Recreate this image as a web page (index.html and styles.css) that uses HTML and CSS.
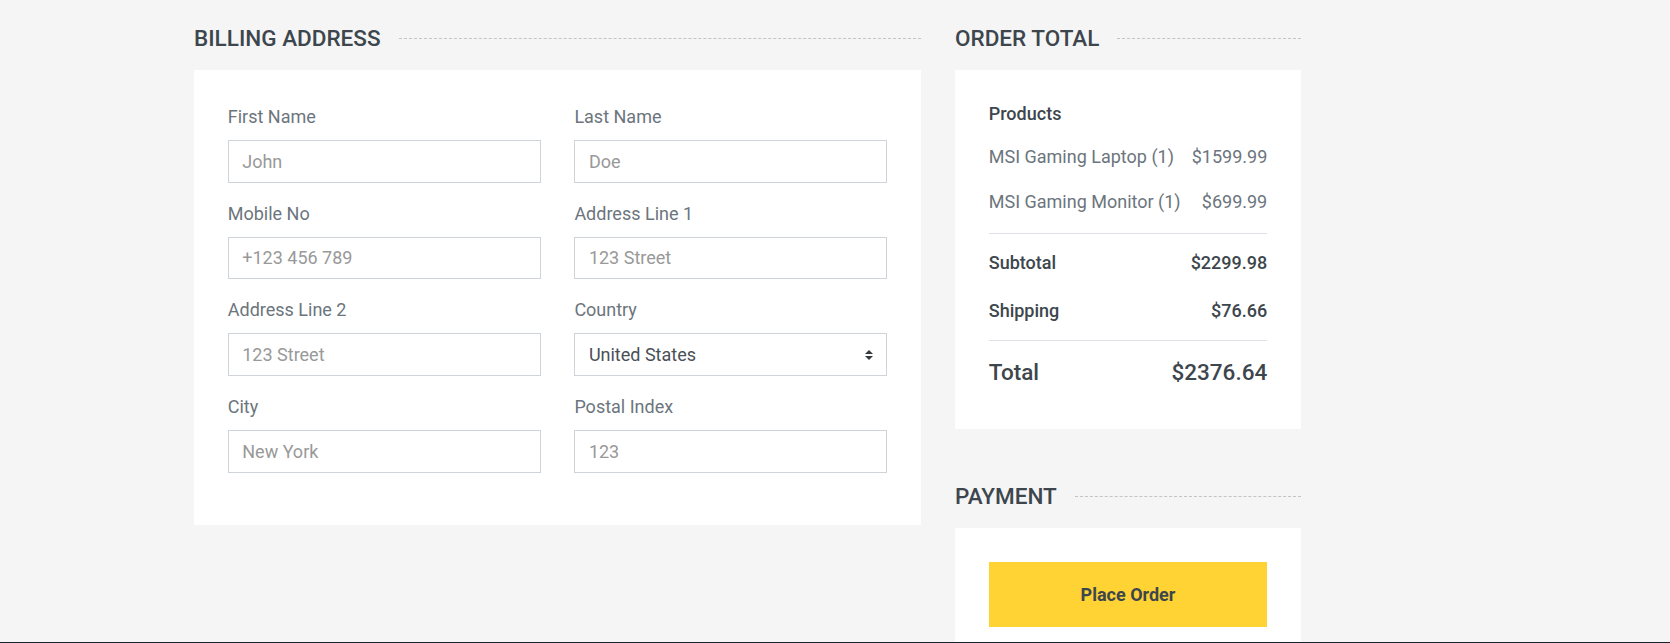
FILE: index.html
```html
<!DOCTYPE html>
<html lang="en">
<head>
<meta charset="utf-8">
<title>Checkout</title>
<link rel="stylesheet" href="styles.css">
</head>
<body>
<main class="checkout">
  <section class="col-billing">
    <h5 class="section-title"><span>Billing Address</span></h5>
    <div class="card billing-card">
      <div class="form-grid">
        <div class="form-group">
          <label>First Name</label>
          <input class="form-control" type="text" placeholder="John">
        </div>
        <div class="form-group">
          <label>Last Name</label>
          <input class="form-control" type="text" placeholder="Doe">
        </div>
        <div class="form-group">
          <label>Mobile No</label>
          <input class="form-control" type="text" placeholder="+123 456 789">
        </div>
        <div class="form-group">
          <label>Address Line 1</label>
          <input class="form-control" type="text" placeholder="123 Street">
        </div>
        <div class="form-group">
          <label>Address Line 2</label>
          <input class="form-control" type="text" placeholder="123 Street">
        </div>
        <div class="form-group">
          <label>Country</label>
          <div class="select-wrap">
            <select class="form-control">
              <option selected>United States</option>
              <option>Afghanistan</option>
              <option>Albania</option>
              <option>Algeria</option>
            </select>
            <svg class="select-caret" width="8" height="10" viewBox="0 0 4 5" aria-hidden="true"><path fill="#343a40" d="M2 0L0 2h4zm0 5L0 3h4z"/></svg>
          </div>
        </div>
        <div class="form-group">
          <label>City</label>
          <input class="form-control" type="text" placeholder="New York">
        </div>
        <div class="form-group">
          <label>Postal Index</label>
          <input class="form-control" type="text" placeholder="123">
        </div>
      </div>
    </div>
  </section>

  <aside class="col-summary">
    <h5 class="section-title"><span>Order Total</span></h5>
    <div class="card order-card">
      <div class="products">
        <h6 class="products-title">Products</h6>
        <div class="line"><p>MSI Gaming Laptop (1)</p><p>$1599.99</p></div>
        <div class="line"><p>MSI Gaming Monitor (1)</p><p>$699.99</p></div>
      </div>
      <div class="totals">
        <div class="line first"><h6>Subtotal</h6><h6>$2299.98</h6></div>
        <div class="line"><h6>Shipping</h6><h6>$76.66</h6></div>
      </div>
      <div class="grand">
        <div class="line"><h5>Total</h5><h5>$2376.64</h5></div>
      </div>
    </div>

    <h5 class="section-title"><span>Payment</span></h5>
    <div class="card payment-card">
      <button class="btn-primary" type="button">Place Order</button>
    </div>
  </aside>
</main>
<div class="footer-edge"></div>
</body>
</html>
```

FILE: styles.css
```css
* {
  box-sizing: border-box;
}

html,
body {
  margin: 0;
}

body {
  background: #f5f5f5;
  font-family: Roboto, "Liberation Sans", Arial, sans-serif;
  font-size: 18px;
  line-height: 1.5;
  color: #6c757d;
}

.checkout {
  display: flex;
  align-items: flex-start;
  gap: 34px;
  padding: 25px 0 0 194px;
}

.col-billing {
  flex: none;
  width: 727px;
}

.col-summary {
  flex: none;
  width: 346px;
}

.section-title {
  display: flex;
  align-items: center;
  margin: 0 0 18px;
  font-size: 22.5px;
  font-weight: 500;
  line-height: 27px;
  color: #3d464d;
  text-transform: uppercase;
}

.section-title span {
  padding-right: 18px;
}

.section-title::after {
  content: "";
  flex: 1;
  border-top: 1px dashed rgba(61, 70, 77, 0.28);
}

.card {
  background: #ffffff;
  padding: 33.75px;
  margin-bottom: 54px;
}

.order-card {
  padding-top: 33px;
  padding-bottom: 34.5px;
}

.form-grid {
  display: grid;
  grid-template-columns: 1fr 1fr;
  column-gap: 33.75px;
}

.form-group {
  margin-bottom: 18px;
}

label {
  display: block;
  margin-bottom: 10.5px;
  line-height: 25.5px;
}

.form-control {
  display: block;
  width: 100%;
  height: 42.75px;
  padding: 0 13.5px;
  font-family: inherit;
  font-size: 18px;
  color: #495057;
  background: #ffffff;
  border: 1px solid #ced4da;
  border-radius: 0;
  outline: none;
}

.form-control::placeholder {
  color: #999999;
  opacity: 1;
}

.select-wrap {
  position: relative;
}

select.form-control {
  appearance: none;
  -webkit-appearance: none;
  padding-right: 32px;
}

.select-caret {
  position: absolute;
  right: 14.5px;
  top: 50%;
  transform: translateY(-50%);
  pointer-events: none;
}

.order-card h6 {
  margin: 0 0 9px;
  font-size: 18px;
  font-weight: 500;
  line-height: 1.2;
  color: #3d464d;
}

.order-card h5 {
  margin: 0 0 9px;
  font-size: 22.5px;
  font-weight: 500;
  line-height: 1.2;
  color: #3d464d;
}

.line {
  display: flex;
  justify-content: space-between;
}

.line p {
  margin: 0 0 18px;
}

.products {
  border-bottom: 1px solid #dee2e6;
}

.order-card .products-title {
  margin-bottom: 18px;
}

.totals {
  border-bottom: 1px solid #dee2e6;
  padding: 18px 0 9px;
}

.totals .first {
  margin-bottom: 18px;
}

.grand {
  padding-top: 9px;
}

.grand .line {
  margin-top: 9px;
}

.btn-primary {
  display: block;
  width: 100%;
  padding: 17.5px 12px 18.5px;
  font-family: inherit;
  font-size: 18px;
  font-weight: 700;
  line-height: 27px;
  color: #3d464d;
  background: #ffd333;
  border: 1px solid #ffd333;
  border-radius: 0;
  cursor: pointer;
}

.footer-edge {
  position: fixed;
  left: 0;
  right: 0;
  bottom: 0;
  height: 1px;
  background: #18212e;
}
```
